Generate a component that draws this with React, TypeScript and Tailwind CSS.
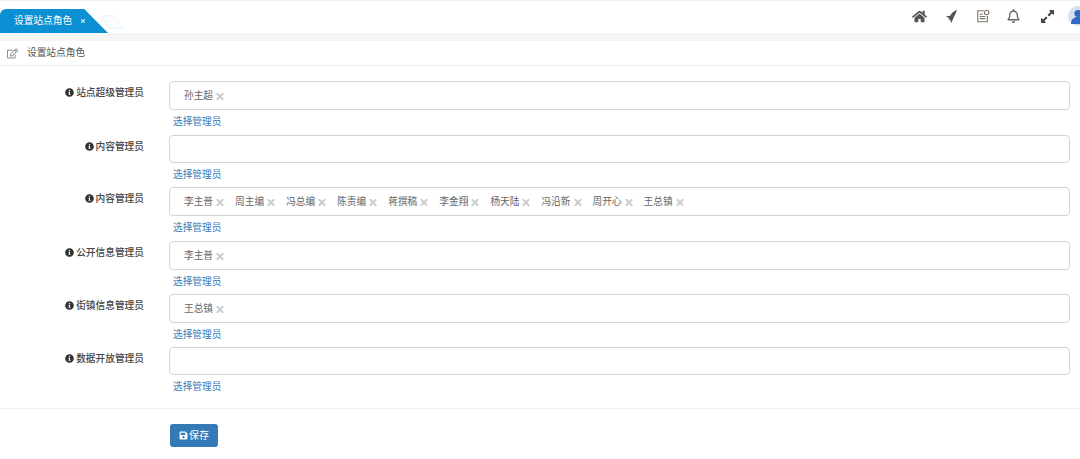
import React from 'react'
import { FaHome, FaInfoCircle, FaRegEdit, FaSave, FaTimes, FaExpandAlt, FaRegBell } from 'react-icons/fa'

const font = "font-['Liberation_Sans','Noto_Sans_CJK_SC',sans-serif]"

interface RoleRow {
  label: string
  names: string[]
  boxClass: string
  rowClass: string
}

const rows: RoleRow[] = [
  { label: '站点超级管理员', names: ['孙主超'], boxClass: 'h-[29px]', rowClass: 'h-[54px]' },
  { label: '内容管理员', names: [], boxClass: 'h-[28px]', rowClass: 'h-[52px]' },
  {
    label: '内容管理员',
    names: ['李主普', '周主编', '冯总编', '陈责编', '蒋撰稿', '李金翔', '杨天陆', '冯沿新', '周开心', '王总镇'],
    boxClass: 'h-[29px]',
    rowClass: 'h-[54px]',
  },
  { label: '公开信息管理员', names: ['李主普'], boxClass: 'h-[29px]', rowClass: 'h-[53px]' },
  { label: '街镇信息管理员', names: ['王总镇'], boxClass: 'h-[29px]', rowClass: 'h-[53px]' },
  { label: '数据开放管理员', names: [], boxClass: 'h-[28px]', rowClass: 'h-[61px]' },
]

function RocketIcon() {
  return (
    <svg viewBox="0 0 14 16" className="h-[15px] w-[13px] text-[#555]" fill="currentColor">
      <path d="M13 .5 7.6 4 5.6 7.2 1 7.8l3.4 2.2-.9 1.8 1.8-.9L6.6 15l1.6-3.2L9.6 8.6 11.4 5z" />
    </svg>
  )
}

function NoteIcon() {
  return (
    <svg viewBox="0 0 16 16" className="h-[14px] w-[14px]" fill="none" stroke="#7d7468" strokeWidth="1.2">
      <path d="M9 2H2v12.5h11V8" />
      <circle cx="12.2" cy="4" r="2.6" />
      <path d="M4.2 6h3.6M4.2 8.5h6.6M4.2 11h6.6" />
    </svg>
  )
}

function Tag({ name }: { name: string }) {
  return (
    <span className="mr-[11px] flex items-center gap-[3px]">
      <span>{name}</span>
      <FaTimes className="h-[11px] w-[8px] text-[#cccccc]" />
    </span>
  )
}

function Row({ row }: { row: RoleRow }) {
  return (
    <div className={`flex ${row.rowClass}`}>
      <div className="flex w-[144px] shrink-0 items-start justify-end gap-[2px] pt-[5px] font-medium leading-[14px] text-[#444]">
        <FaInfoCircle className="mt-[2px] h-[9px] w-[9px] text-[#333]" />
        <span>{row.label}</span>
      </div>
      <div className="ml-[25px] flex-1">
        <div className={`flex items-center rounded-[4px] border border-[#d4d4d4] pt-[2px] pl-[14px] text-[#666] ${row.boxClass}`}>
          {row.names.map((name) => (
            <Tag key={name} name={name} />
          ))}
        </div>
        <a className="mt-[5px] ml-[4px] block leading-[14px] text-[#337ab7]">选择管理员</a>
      </div>
    </div>
  )
}

export default function App() {
  return (
    <div className={`h-[459px] w-[1080px] overflow-hidden bg-white text-[9.7px] ${font}`}>
      <header className="flex h-[33px] items-end justify-between border-t border-[#eeeeee]">
        <div className="flex items-end">
          <div className="flex h-[24px] w-[108px] items-center rounded-tl-[6px] bg-[#0b90d4] pl-[14px] text-white [clip-path:polygon(0_0,78%_0,100%_100%,0_100%)]">
            设置站点角色
            <FaTimes className="ml-[8px] h-[6px] w-[6px] text-[#cfe9f7]" />
          </div>
          <svg viewBox="0 0 30 18" className="-ml-[10px] mb-[3px] h-[15px] w-[30px]" fill="#fbfdff" stroke="#e2f1fc">
            <path d="M1 1h15l12 15H11z" />
          </svg>
        </div>
        <div className="mb-[7px] flex items-center">
          <FaHome className="h-[15px] w-[15px] text-[#555]" />
          <span className="ml-[18px]"><RocketIcon /></span>
          <span className="ml-[18px]"><NoteIcon /></span>
          <FaRegBell className="ml-[17px] h-[14px] w-[13px] text-[#666]" />
          <FaExpandAlt className="ml-[20px] h-[15px] w-[15px] text-[#444]" />
          <svg viewBox="0 0 20 20" className="ml-[13px] -mr-[8px] h-[20px] w-[20px]">
            <circle cx="10" cy="10" r="10" fill="#d5e1f2" />
            <circle cx="10" cy="7.5" r="3.6" fill="#2f6bc0" />
            <path d="M3 18c0-5 3-7 7-7s7 2 7 7z" fill="#2f6bc0" />
          </svg>
        </div>
      </header>
      <div className="h-[8px] bg-[#f5f5f5]" />
      <div className="flex h-[25px] items-center border-b border-[#eeeeee] pt-[1px] pl-[7px] text-[#555]">
        <FaRegEdit className="h-[11px] w-[11px] text-[#888]" />
        <span className="ml-[9px]">设置站点角色</span>
      </div>
      <main className="pt-[15px] pr-[10px]">
        {rows.map((row, i) => (
          <Row key={i} row={row} />
        ))}
      </main>
      <footer className="border-t border-[#f0f0f0] pt-[15px] pl-[170px]">
        <button className="flex h-[23px] w-[48px] items-center justify-center gap-[1px] rounded-[3px] bg-[#337ab7] text-[10px] text-white">
          <FaSave className="h-[9px] w-[9px]" />
          保存
        </button>
      </footer>
    </div>
  )
}
